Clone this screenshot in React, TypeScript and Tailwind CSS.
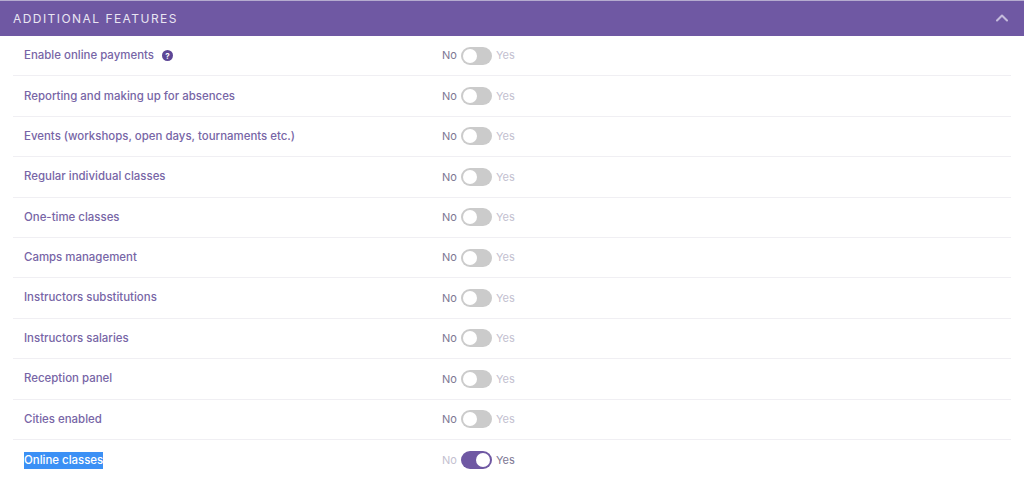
import { ChevronUp } from 'lucide-react';

const features = [
  'Enable online payments',
  'Reporting and making up for absences',
  'Events (workshops, open days, tournaments etc.)',
  'Regular individual classes',
  'One-time classes',
  'Camps management',
  'Instructors substitutions',
  'Instructors salaries',
  'Reception panel',
  'Cities enabled',
  'Online classes',
];

function Toggle({ on }: { on: boolean }) {
  return (
    <div className="flex items-center text-[11px] w-[90px] font-['Inter',sans-serif]">
      <span className={on ? 'text-[#c3bfd0]' : 'text-[#7d7793]'}>No</span>
      <div
        className={
          on
            ? 'ml-[4px] mr-[4px] w-[31px] h-[18px] rounded-full bg-[#6f58a3] flex items-center justify-end px-[2px]'
            : 'ml-[4px] mr-[4px] w-[31px] h-[18px] rounded-full bg-[#cbcbcb] flex items-center justify-start px-[2px]'
        }
      >
        <div className="w-[14px] h-[14px] rounded-full bg-white" />
      </div>
      <span className={on ? 'text-[#7d7793]' : 'text-[#c3bfd0]'}>Yes</span>
    </div>
  );
}

export default function App() {
  return (
    <div className="w-[1024px] h-[479px] bg-white overflow-hidden font-['Inter',sans-serif]">
      {/* Header */}
      <div className="h-[36px] bg-[#6f58a3] border-t border-[#b5abcf] flex items-center justify-between pl-[13px] pr-[12px]">
        <span className="text-[12px] tracking-[1.45px] text-[#e9e5f2] uppercase">Additional features</span>
        <ChevronUp className="w-[20px] h-[20px] text-[#c5bbdc] -mt-[2px]" strokeWidth={2.5} />
      </div>

      {/* Rows */}
      <div className="mx-[13px] w-[998px]">
        {features.map((label, i) => {
          const on = label === 'Online classes';
          return (
            <div
              key={label}
              className={
                i === features.length - 1
                  ? 'h-[40.4px] flex items-center'
                  : 'h-[40.4px] flex items-center border-b border-[#f0eff3]'
              }
            >
              <div className="w-[429px] pl-[11px] flex items-center text-[11.45px] font-medium text-[#7765a6]">
                <span className={on ? 'bg-[#3b90f5] text-white' : ''}>{label}</span>
                {i === 0 && (
                  <span className="ml-[8px] w-[11px] h-[11px] rounded-full bg-[#5d4696] text-white text-[8px] font-bold flex items-center justify-center">
                    ?
                  </span>
                )}
              </div>
              <Toggle on={on} />
            </div>
          );
        })}
      </div>
    </div>
  );
}
